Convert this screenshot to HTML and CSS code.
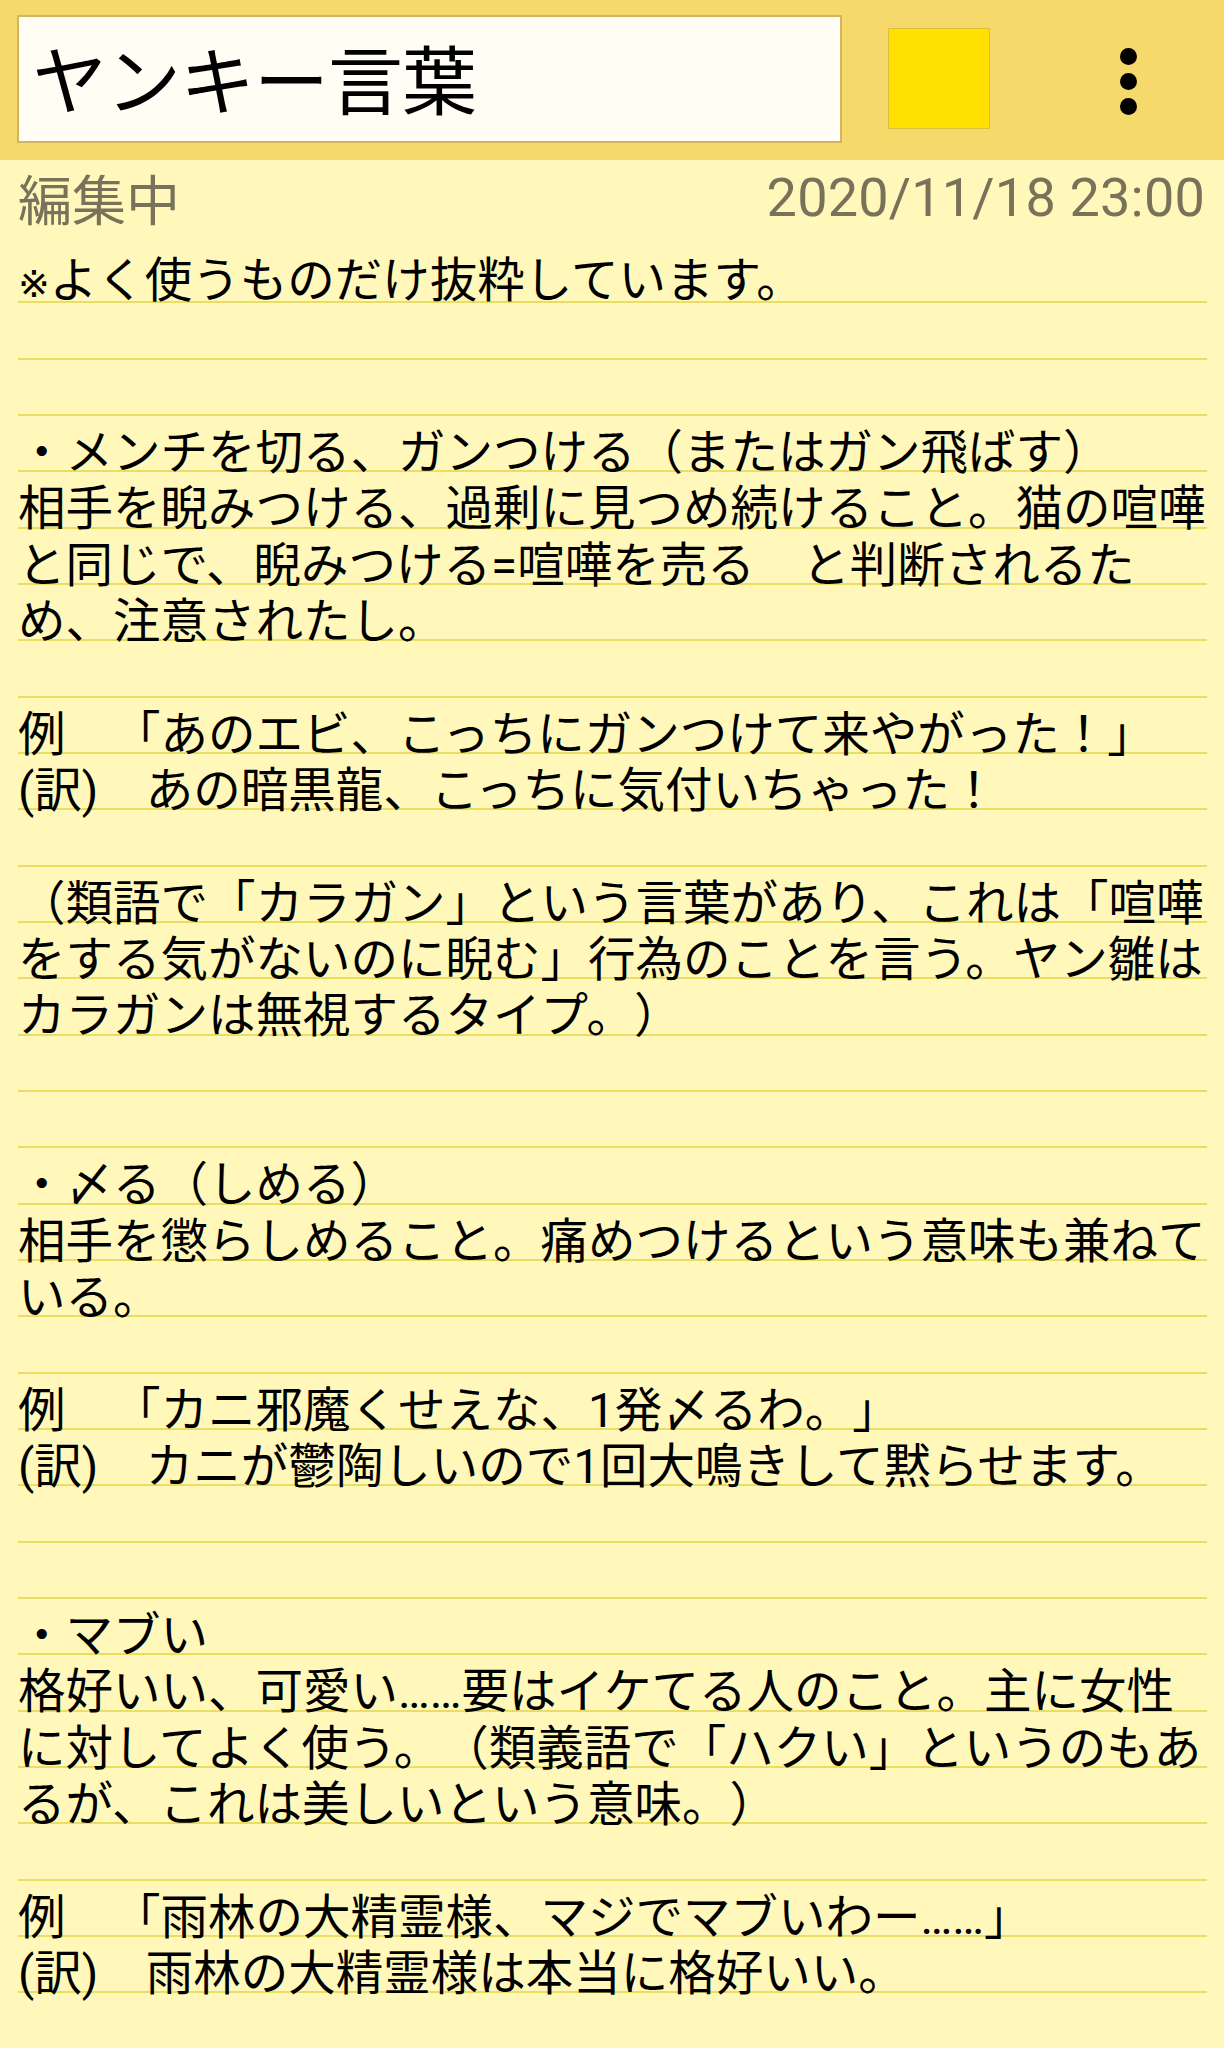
FILE: index.html
```html
<!DOCTYPE html>
<html lang="ja">
<head>
<meta charset="utf-8">
<title>ヤンキー言葉</title>
<link rel="stylesheet" href="styles.css">
</head>
<body>
<div class="app">
  <header class="toolbar">
    <div class="title-box">ヤンキー言葉</div>
    <div class="color-swatch"></div>
    <div class="menu" aria-label="menu">
      <span class="dot"></span><span class="dot"></span><span class="dot"></span>
    </div>
  </header>
  <div class="status">
    <span class="state">編集中</span>
    <span class="date">2020/11/18 23:00</span>
  </div>
  <main class="note">
    <p><span class="mark">※</span>よく使うものだけ抜粋しています。</p>
    <p class="gap2"></p>
    <p>・メンチを切る、ガンつける（またはガン飛ばす）</p>
    <p>相手を睨みつける、過剰に見つめ続けること。猫の喧嘩と同じで、睨みつける=喧嘩を売る　と判断されるため、注意されたし。</p>
    <p class="gap1"></p>
    <p>例　「あのエビ、こっちにガンつけて来やがった！」</p>
    <p>(訳)　あの暗黒龍、こっちに気付いちゃった！</p>
    <p class="gap1"></p>
    <p>（類語で「カラガン」という言葉があり、これは「喧嘩をする気がないのに睨む」行為のことを言う。ヤン雛はカラガンは無視するタイプ。）</p>
    <p class="gap2"></p>
    <p>・〆る（しめる）</p>
    <p>相手を懲らしめること。痛めつけるという意味も兼ねている。</p>
    <p class="gap1"></p>
    <p>例　「カニ邪魔くせえな、1発〆るわ。」</p>
    <p>(訳)　カニが鬱陶しいので1回大鳴きして黙らせます。</p>
    <p class="gap2"></p>
    <p>・マブい</p>
    <p>格好いい、可愛い……要はイケてる人のこと。主に女性に対してよく使う。（類義語で「ハクい」というのもあるが、これは美しいという意味。）</p>
    <p class="gap1"></p>
    <p>例　「雨林の大精霊様、マジでマブいわー……」</p>
    <p>(訳)　雨林の大精霊様は本当に格好いい。</p>
  </main>
</div>
</body>
</html>
```
FILE: styles.css
```css
* { box-sizing: border-box; }
html, body {
  margin: 0;
  padding: 0;
  background: #fff8ba;
}
body {
  font-family: "Roboto", "Noto Sans CJK JP", sans-serif;
  color: #000;
  text-spacing-trim: space-all;
}
.app {
  width: 1224px;
  min-height: 2048px;
  display: flex;
  flex-direction: column;
  overflow: hidden;
}
.toolbar {
  height: 160px;
  background: #f5d96a;
  display: flex;
  align-items: flex-start;
  padding: 15px 0 0 17px;
}
.title-box {
  width: 825px;
  height: 128px;
  background: #fffdf4;
  border: 2px solid #d2b65e;
  font-size: 75px;
  line-height: 120px;
  padding-left: 13px;
  font-family: "Noto Sans CJK JP", sans-serif;
  letter-spacing: -1px;
  white-space: nowrap;
  overflow: hidden;
}
.color-swatch {
  width: 102px;
  height: 101px;
  margin-top: 13px;
  margin-left: 46px;
  background: #ffe000;
  border: 1.5px solid #dcbf3c;
}
.menu {
  width: 60px;
  margin-left: 108px;
  margin-top: 33px;
  display: flex;
  flex-direction: column;
  align-items: center;
  gap: 8px;
}
.dot {
  width: 17px;
  height: 17px;
  border-radius: 50%;
  background: #000;
}
.status {
  height: 86px;
  display: flex;
  justify-content: space-between;
  align-items: flex-start;
  padding: 4px 19px 0 18px;
  color: #78725b;
  font-size: 54px;
  line-height: 68px;
}
.state {
  font-family: "Noto Sans CJK JP", sans-serif;
  font-size: 54px;
}
.date {
  font-family: "Roboto", sans-serif;
  letter-spacing: 0.2px;
}
.note {
  flex: 1;
  margin: 0 17px 0 18px;
  padding-top: 7px;
  font-size: 47.5px;
  line-height: 56.33px;
  background-image: repeating-linear-gradient(
    to bottom,
    transparent 0,
    transparent 54.33px,
    #e9dd63 54.33px,
    #e9dd63 56.33px
  );
  background-origin: content-box;
  background-clip: content-box;
  background-position: 0 -6px;
}
.note p {
  margin: 0;
  min-height: 56.33px;
}
.note p.gap1 { height: 56.33px; }
.note p.gap2 { height: 112.66px; }
.mark {
  font-family: "DejaVu Sans", sans-serif;
  font-size: 38px;
}
```
